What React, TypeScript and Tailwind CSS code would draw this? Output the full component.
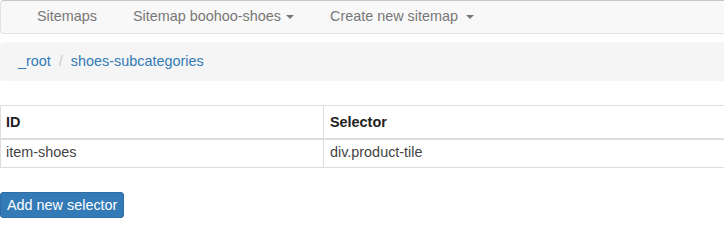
const Caret = () => (
  <span className="ml-[5px] inline-block h-0 w-0 border-x-[4px] border-t-[4px] border-x-transparent border-t-[#777] align-middle" />
);

const App = () => {
  return (
    <div className="w-[724px] h-[245px] overflow-hidden bg-white" style={{ fontFamily: '"Liberation Sans", Arial, sans-serif' }}>
      <div className="w-[760px]">
        {/* navbar */}
        <nav className="flex h-[34px] items-center rounded-[4px] border border-[#e2e2e2] border-t-[#c8c8c8] bg-[#f8f8f8] pl-[18px] pb-[1px] text-[14.4px] text-[#777]">
          <span className="px-[18px]">Sitemaps</span>
          <span className="px-[18px]">
            Sitemap boohoo-shoes
            <Caret />
          </span>
          <span className="px-[18px]">
            Create new sitemap
            <span className="ml-[3px]"><Caret /></span>
          </span>
        </nav>

        {/* breadcrumb */}
        <div className="mt-[8px] flex h-[39px] items-center rounded-[4px] bg-[#f5f5f5] pl-[18px] pt-[1px] text-[14.4px]">
          <span className="text-[#337ab7]">_root</span>
          <span className="px-[8px] text-[#ccc]">/</span>
          <span className="text-[#337ab7]">shoes-subcategories</span>
        </div>

        {/* selectors table */}
        <table className="mt-[24px] w-[760px] border-collapse text-[14.4px]">
          <thead>
            <tr>
              <th className="w-[323px] border border-b-2 border-[#ddd] px-[5px] pt-[2px] h-[33px] text-left font-bold text-[#222]">ID</th>
              <th className="border border-b-2 border-[#ddd] px-[6px] pt-[2px] h-[33px] text-left font-bold text-[#222]">Selector</th>
            </tr>
          </thead>
          <tbody>
            <tr>
              <td className="border border-[#ddd] px-[5px] pb-[1px] h-[29px] text-[#444]">item-shoes</td>
              <td className="border border-[#ddd] px-[6px] pb-[1px] h-[29px] text-[#444]">div.product-tile</td>
            </tr>
          </tbody>
        </table>

        <button className="mt-[24px] h-[26px] rounded-[3px] border border-[#2e6da4] bg-[#337ab7] px-[6px] text-[14.4px] leading-none text-white">
          Add new selector
        </button>
      </div>
    </div>
  );
};

export default App;
